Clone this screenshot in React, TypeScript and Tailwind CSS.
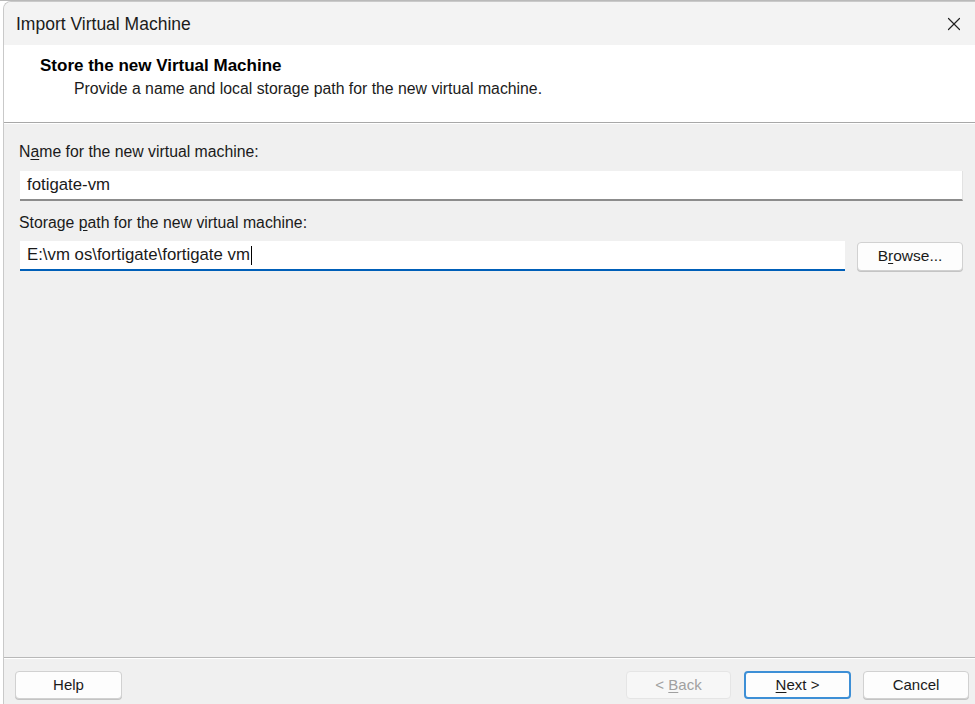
import { X } from "lucide-react";

const font = { fontFamily: '"Liberation Sans", Arial, sans-serif' };

export default function App() {
  return (
    <div className="h-[704px] w-[975px] overflow-hidden bg-white text-[#1a1a1a]" style={font}>
      {/* window behind, only its bottom edge shows */}
      <div className="h-[1px] bg-[#b9b9b9]" />
      <div className="ml-[3px] flex h-[703px] flex-col overflow-hidden rounded-tl-[8px] border-l border-t border-[#c9c9c9] bg-[#f0f0f0]">
        {/* title bar */}
        <div className="flex h-[43px] shrink-0 items-center justify-between bg-[#f3f3f3] pl-[12px] pr-[10px]">
          <span className="text-[17.5px] leading-[20px] text-[#1b1b1b]">Import Virtual Machine</span>
          <X className="h-[22px] w-[22px] text-[#222]" strokeWidth={1.3} />
        </div>

        {/* header */}
        <div className="flex h-[77px] shrink-0 flex-col bg-white pl-[36px] pt-[11px]">
          <span className="text-[17px] font-bold leading-[20px] text-black">Store the new Virtual Machine</span>
          <span className="ml-[34px] mt-[3px] text-[15.8px] leading-[20px] text-[#1b1b1b]">
            Provide a name and local storage path for the new virtual machine.
          </span>
        </div>
        <div className="h-[1px] shrink-0 bg-[#a8a8a8]" />
        <div className="h-[1px] shrink-0 bg-white" />

        {/* body */}
        <div className="flex flex-1 flex-col pl-[15px] pr-[12px] pt-[18px]">
          <label className="text-[15.8px] leading-[20px]">
            N<span className="underline underline-offset-2">a</span>me for the new virtual machine:
          </label>
          <div className="ml-[1px] mt-[9px] flex h-[30px] items-center border-b-[2px] border-r border-[#8c8c8c] border-r-[#e2e2e2] bg-white pl-[7px] text-[16.8px]">
            fotigate-vm
          </div>

          <label className="mt-[12px] text-[15.8px] leading-[20px]">
            Storage <span className="underline underline-offset-2">p</span>ath for the new virtual machine:
          </label>
          <div className="mt-[8px] flex items-center gap-[12px]">
            <div className="ml-[1px] flex h-[30px] flex-1 items-center border-b-[2px] border-[#005fb8] bg-white pl-[7px] text-[16.8px]">
              E:\vm os\fortigate\fortigate vm
              <span className="ml-[1px] inline-block h-[19px] w-[1px] bg-black" />
            </div>
            <button className="h-[29px] w-[106px] rounded-[4px] border border-[#d1d1d1] bg-[#fdfdfd] text-[15.5px] shadow-[0_1px_0_#c4c4c4]">
              B<span className="underline underline-offset-2">r</span>owse...
            </button>
          </div>
        </div>

        {/* footer */}
        <div className="h-[1px] shrink-0 bg-[#b8b8b8]" />
        <div className="h-[1px] shrink-0 bg-white" />
        <div className="flex h-[45px] shrink-0 items-start pl-[11px] pr-[6px] pt-[12px] text-[15px]">
          <button className="h-[28px] w-[107px] rounded-[4px] border border-[#d1d1d1] bg-[#fdfdfd] shadow-[0_1px_0_#c4c4c4]">
            Help
          </button>
          <div className="flex-1" />
          <button className="h-[28px] w-[105px] rounded-[4px] border border-[#e5e5e5] bg-[#f7f7f7] text-[#a0a0a0]">
            &lt; <span className="underline underline-offset-2">B</span>ack
          </button>
          <button className="ml-[13px] h-[28px] w-[107px] rounded-[4px] border-[2px] border-[#3d8fd6] bg-[#fdfdfd]">
            <span className="underline underline-offset-2">N</span>ext &gt;
          </button>
          <button className="ml-[12px] h-[28px] w-[106px] rounded-[4px] border border-[#d1d1d1] bg-[#fdfdfd] shadow-[0_1px_0_#c4c4c4]">
            Cancel
          </button>
        </div>
      </div>
    </div>
  );
}
